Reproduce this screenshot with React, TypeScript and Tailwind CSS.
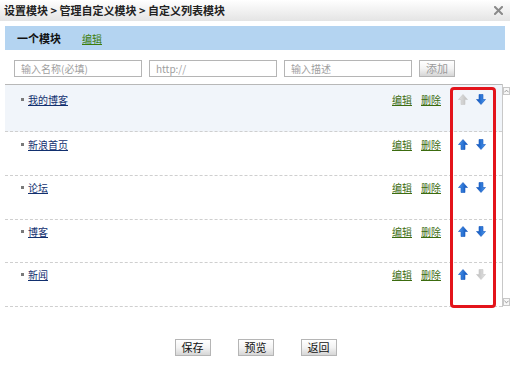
import React from 'react';

const items = [
  { name: '我的博客', up: false, down: true, h: 'h-[47px] pt-[8px] bg-[#f1f5fa]' },
  { name: '新浪首页', up: true, down: true, h: 'h-[44px] pt-[6px]' },
  { name: '论坛', up: true, down: true, h: 'h-[44px] pt-[5px]' },
  { name: '博客', up: true, down: true, h: 'h-[43px] pt-[5px]' },
  { name: '新闻', up: true, down: false, h: 'h-[44px] pt-[5px]' },
];

function Arrow({ dir, on }: { dir: 'up' | 'down'; on: boolean }) {
  const id = `g-${dir}-${on ? 1 : 0}`;
  return (
    <svg width="10" height="11" viewBox="0 0 10 11" className={dir === 'down' ? 'rotate-180' : ''}>
      <defs>
        <linearGradient id={id} x1="0" y1="0" x2="1" y2="0">
          <stop offset="0" stopColor={on ? '#4d9af0' : '#e4e4e4'} />
          <stop offset="1" stopColor={on ? '#0b4fb8' : '#bdbdbd'} />
        </linearGradient>
      </defs>
      <path
        d="M5 0.5 L9.5 5.5 L7 5.5 L7 10.5 L3 10.5 L3 5.5 L0.5 5.5 Z"
        fill={`url(#${id})`}
        stroke={on ? '#1459c0' : '#c8c8c8'}
        strokeWidth="0.6"
        strokeLinejoin="round"
      />
    </svg>
  );
}

function Btn({ label, disabled }: { label: string; disabled?: boolean }) {
  return (
    <button
      className={`h-[17px] w-[36px] border border-[#b5b5b5] bg-gradient-to-b from-white via-[#f3f3f3] to-[#d6d6d6] text-[11px] leading-[15px] ${
        disabled ? 'text-[#9a9a9a]' : 'text-[#111]'
      }`}
    >
      {label}
    </button>
  );
}

export default function App() {
  return (
    <div
      className="relative h-[367px] w-[510px] overflow-hidden bg-white text-[#333]"
      style={{ fontFamily: '"Noto Sans CJK SC", "Liberation Sans", sans-serif' }}
    >
      {/* title bar */}
      <div className="flex h-[21px] items-center justify-between bg-gradient-to-b from-white to-[#e4e4e4] pl-[4px] pr-[7px]">
        <span className="text-[11px] font-bold leading-none text-[#222]">设置模块 &gt; 管理自定义模块 &gt; 自定义列表模块</span>
        <svg width="9" height="9" viewBox="0 0 9 9">
          <path d="M1 1 L8 8 M8 1 L1 8" stroke="#8a8a8a" strokeWidth="2" strokeLinecap="square" />
        </svg>
      </div>

      {/* module bar */}
      <div className="mx-[5px] mt-[5px] flex h-[24px] items-center gap-[21px] bg-[#b4d4f1] pl-[12px]">
        <span className="text-[11px] font-bold text-[#111]">一个模块</span>
        <a className="text-[10px] text-[#3c7d0c] underline">编辑</a>
      </div>

      {/* add row */}
      <div className="mt-[10px] flex items-center gap-[7px] pl-[14px]">
        <input
          className="h-[17px] w-[128px] border border-[#b5b5b5] px-[6px] text-[10px] placeholder:text-[#a0a0a0]"
          placeholder="输入名称(必填)"
        />
        <input
          className="h-[17px] w-[128px] border border-[#b5b5b5] px-[6px] text-[10px] placeholder:text-[#a0a0a0]"
          placeholder="http://"
        />
        <input
          className="h-[17px] w-[128px] border border-[#b5b5b5] px-[6px] text-[10px] placeholder:text-[#a0a0a0]"
          placeholder="输入描述"
        />
        <Btn label="添加" disabled />
      </div>

      {/* list */}
      <div className="mt-[7px] flex">
        <div className="ml-[5px] w-[497px] border-t border-[#b8b8b8]">
          {items.map((it) => (
            <div key={it.name} className={`flex items-start border-b border-dashed border-[#cfcfcf] ${it.h}`}>
              <div className="flex items-center pl-[16px]">
                <span className="mr-[4px] h-[3px] w-[3px] bg-[#7a7a7a]" />
                <a className="text-[10px] leading-[13px] text-[#12306f] underline">{it.name}</a>
              </div>
              <div className="ml-auto flex items-center pr-[16px]">
                <a className="text-[10px] leading-[13px] text-[#3c6c10] underline">编辑</a>
                <a className="ml-[9px] text-[10px] leading-[13px] text-[#3c6c10] underline">删除</a>
                <span className="ml-[17px] flex gap-[8px]">
                  <Arrow dir="up" on={it.up} />
                  <Arrow dir="down" on={it.down} />
                </span>
              </div>
            </div>
          ))}
        </div>
        <div className="flex w-[8px] flex-col justify-between border-l border-[#c8c8c8] pb-[1px] pt-[3px]">
          <div className="flex h-[8px] items-center justify-center border border-[#c8c8c8] bg-[#f7f7f7]">
            <svg width="6" height="4" viewBox="0 0 6 4">
              <path d="M0.5 3.5 L3 1 L5.5 3.5" fill="none" stroke="#888" strokeWidth="1" />
            </svg>
          </div>
          <div className="flex h-[8px] items-center justify-center border border-[#c8c8c8] bg-[#f7f7f7]">
            <svg width="6" height="4" viewBox="0 0 6 4">
              <path d="M0.5 0.5 L3 3 L5.5 0.5" fill="none" stroke="#888" strokeWidth="1" />
            </svg>
          </div>
        </div>
      </div>

      {/* footer buttons */}
      <div className="mt-[32px] flex justify-center gap-[27px] pl-[1px]">
        <Btn label="保存" />
        <Btn label="预览" />
        <Btn label="返回" />
      </div>

      {/* annotation */}
      <div className="absolute left-[450px] top-[87px] h-[221px] w-[46px] rounded-[4px] border-[3px] border-[#e3141b]" />
    </div>
  );
}
